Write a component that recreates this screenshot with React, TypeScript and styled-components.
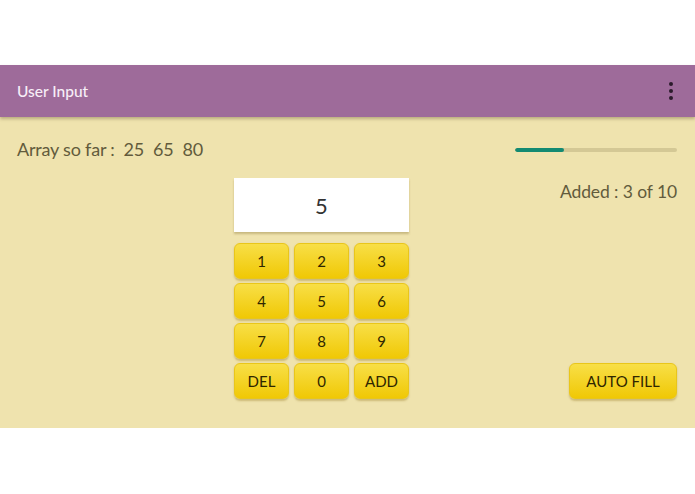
import React from "react";
import styled, { createGlobalStyle } from "styled-components";

const Global = createGlobalStyle`
  html, body { margin: 0; padding: 0; background: #ffffff; }
  body { font-family: Lato, "Open Sans", sans-serif; }
  * { box-sizing: border-box; }
`;

const Page = styled.div`
  width: 695px;
  height: 494px;
  padding-top: 65px;
  background: #ffffff;
`;

const Screen = styled.div`
  display: flex;
  flex-direction: column;
  height: 363px;
  background: #efe3ae;
`;

const Toolbar = styled.header`
  height: 52px;
  flex: none;
  display: flex;
  align-items: center;
  justify-content: space-between;
  padding: 0 17px 0 17px;
  background: #9e6b9a;
  box-shadow: 0 2px 3px rgba(90, 70, 40, 0.35);
  position: relative;
  z-index: 1;
`;

const Title = styled.div`
  color: #f7eef7;
  font-size: 15.5px;
  font-weight: 500;
`;

const MenuDots = styled.div`
  display: flex;
  flex-direction: column;
  gap: 2.5px;
  padding: 0 5px;
  span {
    width: 4.5px;
    height: 4.5px;
    border-radius: 50%;
    background: #2b1a2b;
  }
`;

const Content = styled.main`
  flex: 1;
  padding: 20px 18px 29px 17px;
  display: flex;
  flex-direction: column;
`;

const TopRow = styled.div`
  height: 24px;
  display: flex;
  align-items: center;
  justify-content: space-between;
`;

const ArrayText = styled.div`
  display: flex;
  gap: 9px;
  color: #625b3c;
  font-size: 18px;
  letter-spacing: -0.2px;
`;

const Progress = styled.div`
  width: 162px;
  height: 4px;
  margin-top: 2px;
  background: #d4c895;
  border-radius: 2px;
  overflow: hidden;
`;

const ProgressFill = styled.div`
  height: 100%;
  background: #138a72;
  border-radius: 2px;
`;

const Body = styled.div`
  flex: 1;
  margin-top: 17px;
  display: grid;
  grid-template-columns: 217px 175px 1fr;
`;

const Keypad = styled.div`
  grid-column: 2;
  display: flex;
  flex-direction: column;
`;

const Display = styled.div`
  height: 54px;
  background: #ffffff;
  display: flex;
  align-items: center;
  justify-content: center;
  color: #333333;
  font-size: 22px;
  box-shadow: 0 1.5px 2px rgba(150, 130, 70, 0.45);
  margin-bottom: 11px;
`;

const Keys = styled.div`
  display: grid;
  grid-template-columns: repeat(3, 55px);
  grid-auto-rows: 36px;
  column-gap: 5px;
  row-gap: 4px;
`;

const Key = styled.button<{ $wide?: boolean }>`
  width: ${(p) => (p.$wide ? "108px" : "100%")};
  height: 36px;
  border: 1px solid #e9c61a;
  border-radius: 6px;
  background: linear-gradient(#f8df47, #f0c805);
  box-shadow: 0 1.5px 2px rgba(140, 110, 20, 0.35);
  color: #2f2600;
  font-family: Lato, "Open Sans", sans-serif;
  font-size: 15px;
  padding: 0;
  display: flex;
  align-items: center;
  justify-content: center;
`;

const Side = styled.div`
  grid-column: 3;
  display: flex;
  flex-direction: column;
  align-items: flex-end;
  justify-content: space-between;
`;

const Added = styled.div`
  color: #625b3c;
  font-size: 17.5px;
  letter-spacing: -0.1px;
  margin-top: 3px;
`;

const keys = ["1", "2", "3", "4", "5", "6", "7", "8", "9", "DEL", "0", "ADD"];
const values = [25, 65, 80];

export default function App() {
  const added = values.length;
  const total = 10;
  return (
    <>
      <Global />
      <Page>
        <Screen>
          <Toolbar>
            <Title>User Input</Title>
            <MenuDots>
              <span />
              <span />
              <span />
            </MenuDots>
          </Toolbar>
          <Content>
            <TopRow>
              <ArrayText>
                <span>Array so far :</span>
                {values.map((v) => (
                  <span key={v}>{v}</span>
                ))}
              </ArrayText>
              <Progress>
                <ProgressFill style={{ width: `${(added / total) * 100}%` }} />
              </Progress>
            </TopRow>
            <Body>
              <Keypad>
                <Display>5</Display>
                <Keys>
                  {keys.map((k) => (
                    <Key key={k}>{k}</Key>
                  ))}
                </Keys>
              </Keypad>
              <Side>
                <Added>
                  Added : {added} of {total}
                </Added>
                <Key $wide>AUTO FILL</Key>
              </Side>
            </Body>
          </Content>
        </Screen>
      </Page>
    </>
  );
}
